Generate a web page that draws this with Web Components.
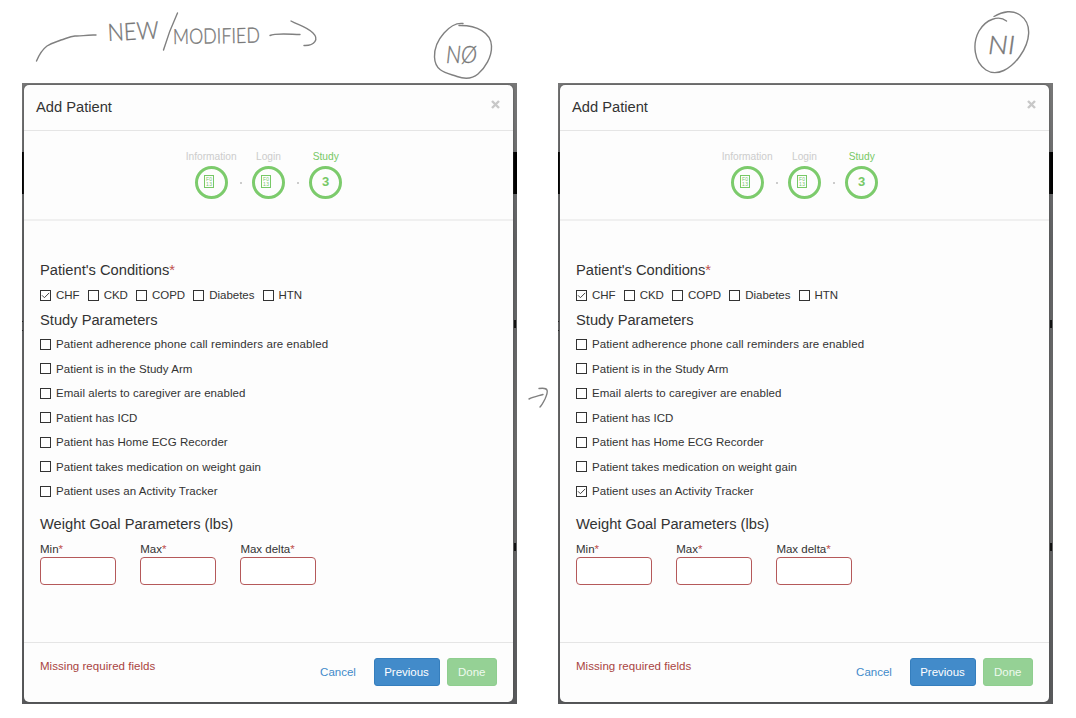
<!DOCTYPE html>
<html lang="en"><head><meta charset="utf-8"><title>Add Patient flow</title>
<style>body{margin:0;background:#fff;font-family:"Liberation Sans",Arial,sans-serif;overflow:hidden}</style></head>
<body><flow-board></flow-board>
<script>
const define=(name,html,after)=>{
  const t=document.createElement('template');t.innerHTML=html;
  customElements.define(name,class extends HTMLElement{
    constructor(){super();this.attachShadow({mode:'open'}).append(t.content.cloneNode(true));}
    connectedCallback(){if(after)after(this,this.shadowRoot);}
  });
};

define('check-item',`<style>
:host{display:flex;align-items:center;font-size:11.5px;letter-spacing:.06px;line-height:16px;color:#333;white-space:nowrap}
svg{width:11px;height:11px;margin-right:5px;flex:none;display:block}
.tick{display:none}:host([checked]) .tick{display:block}
</style><svg viewBox="0 0 11 11"><rect x=".5" y=".5" width="10" height="10" fill="#fff" stroke="#333"/><path class="tick" d="M2 5.3 4.4 7.7 9.2 2.9" fill="none" stroke="#444" stroke-width="1"/></svg><span><slot></slot></span>`);

define('wizard-step',`<style>
:host{display:flex;flex-direction:column;align-items:center;width:57.3px;color:#ccc;font-size:10.2px;line-height:12px;position:relative}
.label{height:15px;white-space:nowrap}
:host([active]) .label{color:#77c866}
.ring{box-sizing:border-box;width:33px;height:33px;border:3px solid #7ccb6c;border-radius:50%;display:flex;align-items:center;justify-content:center;color:#77c866;font-size:13px;font-weight:bold;padding-bottom:1px}
.box{width:8px;height:11px;border:1px solid #77c866;margin:-2px 4px 0 0;display:block}
.dot{position:absolute;right:-2px;top:31px;width:2px;height:2px;background:#bbb;border-radius:1px}
:host([active]) .dot,:host([active]) .box{display:none}
</style><div class="label"><slot></slot></div><div class="ring"><slot name="number"></slot>
<svg class="box" viewBox="0 0 8 11"><g fill="#77c866" font-family="Liberation Sans" font-size="5" font-weight="400"><text x="1" y="5" textLength="6">F0</text><text x="1" y="10" textLength="6">13</text></g></svg></div><i class="dot"></i>`);

define('goal-field',`<style>
:host{display:block;width:76px;font-size:11.5px;line-height:14px;color:#333}
b{font-weight:400;color:#c0504d}
input{display:block;box-sizing:border-box;width:76px;height:28px;margin:1px 0 0;border:1px solid #b5595a;border-radius:4px;background:#fff;outline:0}
</style><label><slot></slot><b>*</b><input></label>`);

define('action-button',`<style>
:host{display:block}
button{font:11.5px/16px "Liberation Sans",Arial,sans-serif;height:28px;box-sizing:border-box;border:1px solid transparent;border-radius:3px;background:none;color:#428bca;padding:0;display:block;width:56px}
:host([kind=primary]) button{background:#428bca;border-color:#357ebd;color:#fff;width:66px}
:host([kind=success]) button{background:#95d195;border-color:#8fce8f;color:#effaef;width:49.5px}
</style><button><slot></slot></button>`);

define('patient-dialog',`<style>
:host{display:block;box-sizing:border-box;width:495px;height:621px;padding:2px 4px 2px 2px;
background:linear-gradient(#000,#000) 0 69px/100% 42px no-repeat,linear-gradient(#777,#606163 25%,#696969 58%,#58595b);position:relative}
.modal{height:617px;box-sizing:border-box;background:#fdfdfd;border-radius:5px;display:flex;flex-direction:column;box-shadow:0 0 2px #444;position:relative}
header{height:46px;box-sizing:border-box;border-bottom:1px solid #e5e5e5;display:flex;justify-content:space-between;padding:13px 13px 0 12px;font-size:14.7px;line-height:18px;color:#333}
.close{width:9px;height:9px;margin-top:2px}
.steps{height:90px;box-sizing:border-box;border-bottom:2px solid #f0f0f0;display:flex;padding:20px 0 0 158.5px}
main{height:421px;box-sizing:border-box;padding:39px 16px 0}
h3{font-size:14.7px;line-height:20px;font-weight:400;color:#333;margin:0}
h3 b{font-weight:400;color:#c0504d}
.conditions{display:flex;gap:8.2px;margin:7px 0 7px}
.conditions check-item{letter-spacing:-.04px}
.params{display:flex;flex-direction:column;gap:8.5px;margin:6px 0 15px}
.params check-item:first-child{letter-spacing:.1px}
.goals{display:flex;gap:24.2px;margin-top:8px}
footer{flex:1;border-top:1px solid #e5e5e5;display:flex;padding:15px 16.5px 0 16px;color:#a94442;font-size:11.5px}
.msg{line-height:16px;flex:1;letter-spacing:.04px}
.actions{display:flex;gap:7.5px}
.scrap{position:absolute;right:0;width:4px;height:14px;overflow:hidden}
.scrap i{position:absolute;left:1px;top:3px;width:1.5px;height:8px;background:#111}
.left{position:absolute;left:0;top:238px;width:1px;height:8px;border:solid #222;border-width:1px 0}
</style><i class="left"></i><div class="scrap" style="top:234px"><i></i></div><div class="scrap" style="top:457px"><i></i></div>
<div class="modal"><header><span>Add Patient</span><svg class="close" viewBox="0 0 9 9"><path d="M1 1 8 8M8 1 1 8" stroke="#c8c8c8" stroke-width="2.4"/></svg></header>
<section class="steps"><wizard-step>Information</wizard-step><wizard-step>Login</wizard-step><wizard-step active>Study<span slot="number">3</span></wizard-step></section>
<main><h3>Patient's Conditions<b>*</b></h3>
<div class="conditions"><check-item checked>CHF</check-item><check-item>CKD</check-item><check-item>COPD</check-item><check-item>Diabetes</check-item><check-item>HTN</check-item></div>
<h3>Study Parameters</h3>
<div class="params"><check-item>Patient adherence phone call reminders are enabled</check-item><check-item>Patient is in the Study Arm</check-item><check-item>Email alerts to caregiver are enabled</check-item><check-item>Patient has ICD</check-item><check-item>Patient has Home ECG Recorder</check-item><check-item>Patient takes medication on weight gain</check-item><check-item class="tracker">Patient uses an Activity Tracker</check-item></div>
<h3>Weight Goal Parameters (lbs)</h3>
<div class="goals"><goal-field>Min</goal-field><goal-field>Max</goal-field><goal-field>Max delta</goal-field></div></main>
<footer><span class="msg">Missing required fields</span><div class="actions"><action-button>Cancel</action-button><action-button kind="primary">Previous</action-button><action-button kind="success">Done</action-button></div></footer></div>`,
(host,root)=>root.querySelector('.tracker').toggleAttribute('checked',host.hasAttribute('tracker')));

define('sketch-notes',`<style>
:host{position:absolute;inset:0;pointer-events:none}svg{display:block}
</style><svg width="1076" height="718" viewBox="0 0 1076 718" fill="none" stroke="#808080" stroke-width="1.4" stroke-linecap="round" stroke-linejoin="round">
<path d="M36.500 61C39 55 43 49 47 46C53 42 57 42 61 40C66 38.500 70 36.500 75 36C82 36.500 85 34.500 96 35"/>
<path d="M177.500 13C171 27 167 38 163.500 50"/>
<path d="M270 35.500C275 33 285 34 300 34.500M291 21C298 25 307 27 313 33C319 39 315 46 304 45.500"/>
<path d="M463 23.500C451 22 434 39 434.500 57C435 72 447 73 457 76.500C464 79 472 79 478 74C485 68 492 57 491.500 46C491 33 477 25 459 25.500"/>
<path d="M1006.500 21C999 15 986 19 979 31C972 44 974 62 986 70C997 77 1011 69 1020 56C1030 42 1033 24 1020 15C1013 10 1003 11 994 16.500"/>
<path d="M529 399C533 397 538 396 543 394.500M539 388.500C549 387 548.500 391 545 399C543 403 542 405 540 407"/>
<g fill="#777" stroke="#777" stroke-width=".35" font-family="Lato" font-weight="300">
<text x="108" y="41" font-size="24" textLength="51" lengthAdjust="spacingAndGlyphs" transform="rotate(-3 108 41)">NEW</text>
<text x="173" y="44" font-size="21" textLength="87" lengthAdjust="spacingAndGlyphs" transform="rotate(-1 173 44)">MODIFIED</text>
<text x="446" y="63" font-size="24" textLength="31" lengthAdjust="spacingAndGlyphs" font-style="italic">NØ</text>
<text x="988" y="54" font-size="25" textLength="27" lengthAdjust="spacingAndGlyphs" font-style="italic">NI</text>
</g></svg>`);

define('flow-board',`<style>
:host{display:block;box-sizing:border-box;width:1076px;height:718px;padding:83px 0 0 22px;position:relative}
.screens{display:flex;gap:41px}
</style><div class="screens"><patient-dialog></patient-dialog><patient-dialog tracker></patient-dialog></div><sketch-notes></sketch-notes>`);
</script></body></html>
